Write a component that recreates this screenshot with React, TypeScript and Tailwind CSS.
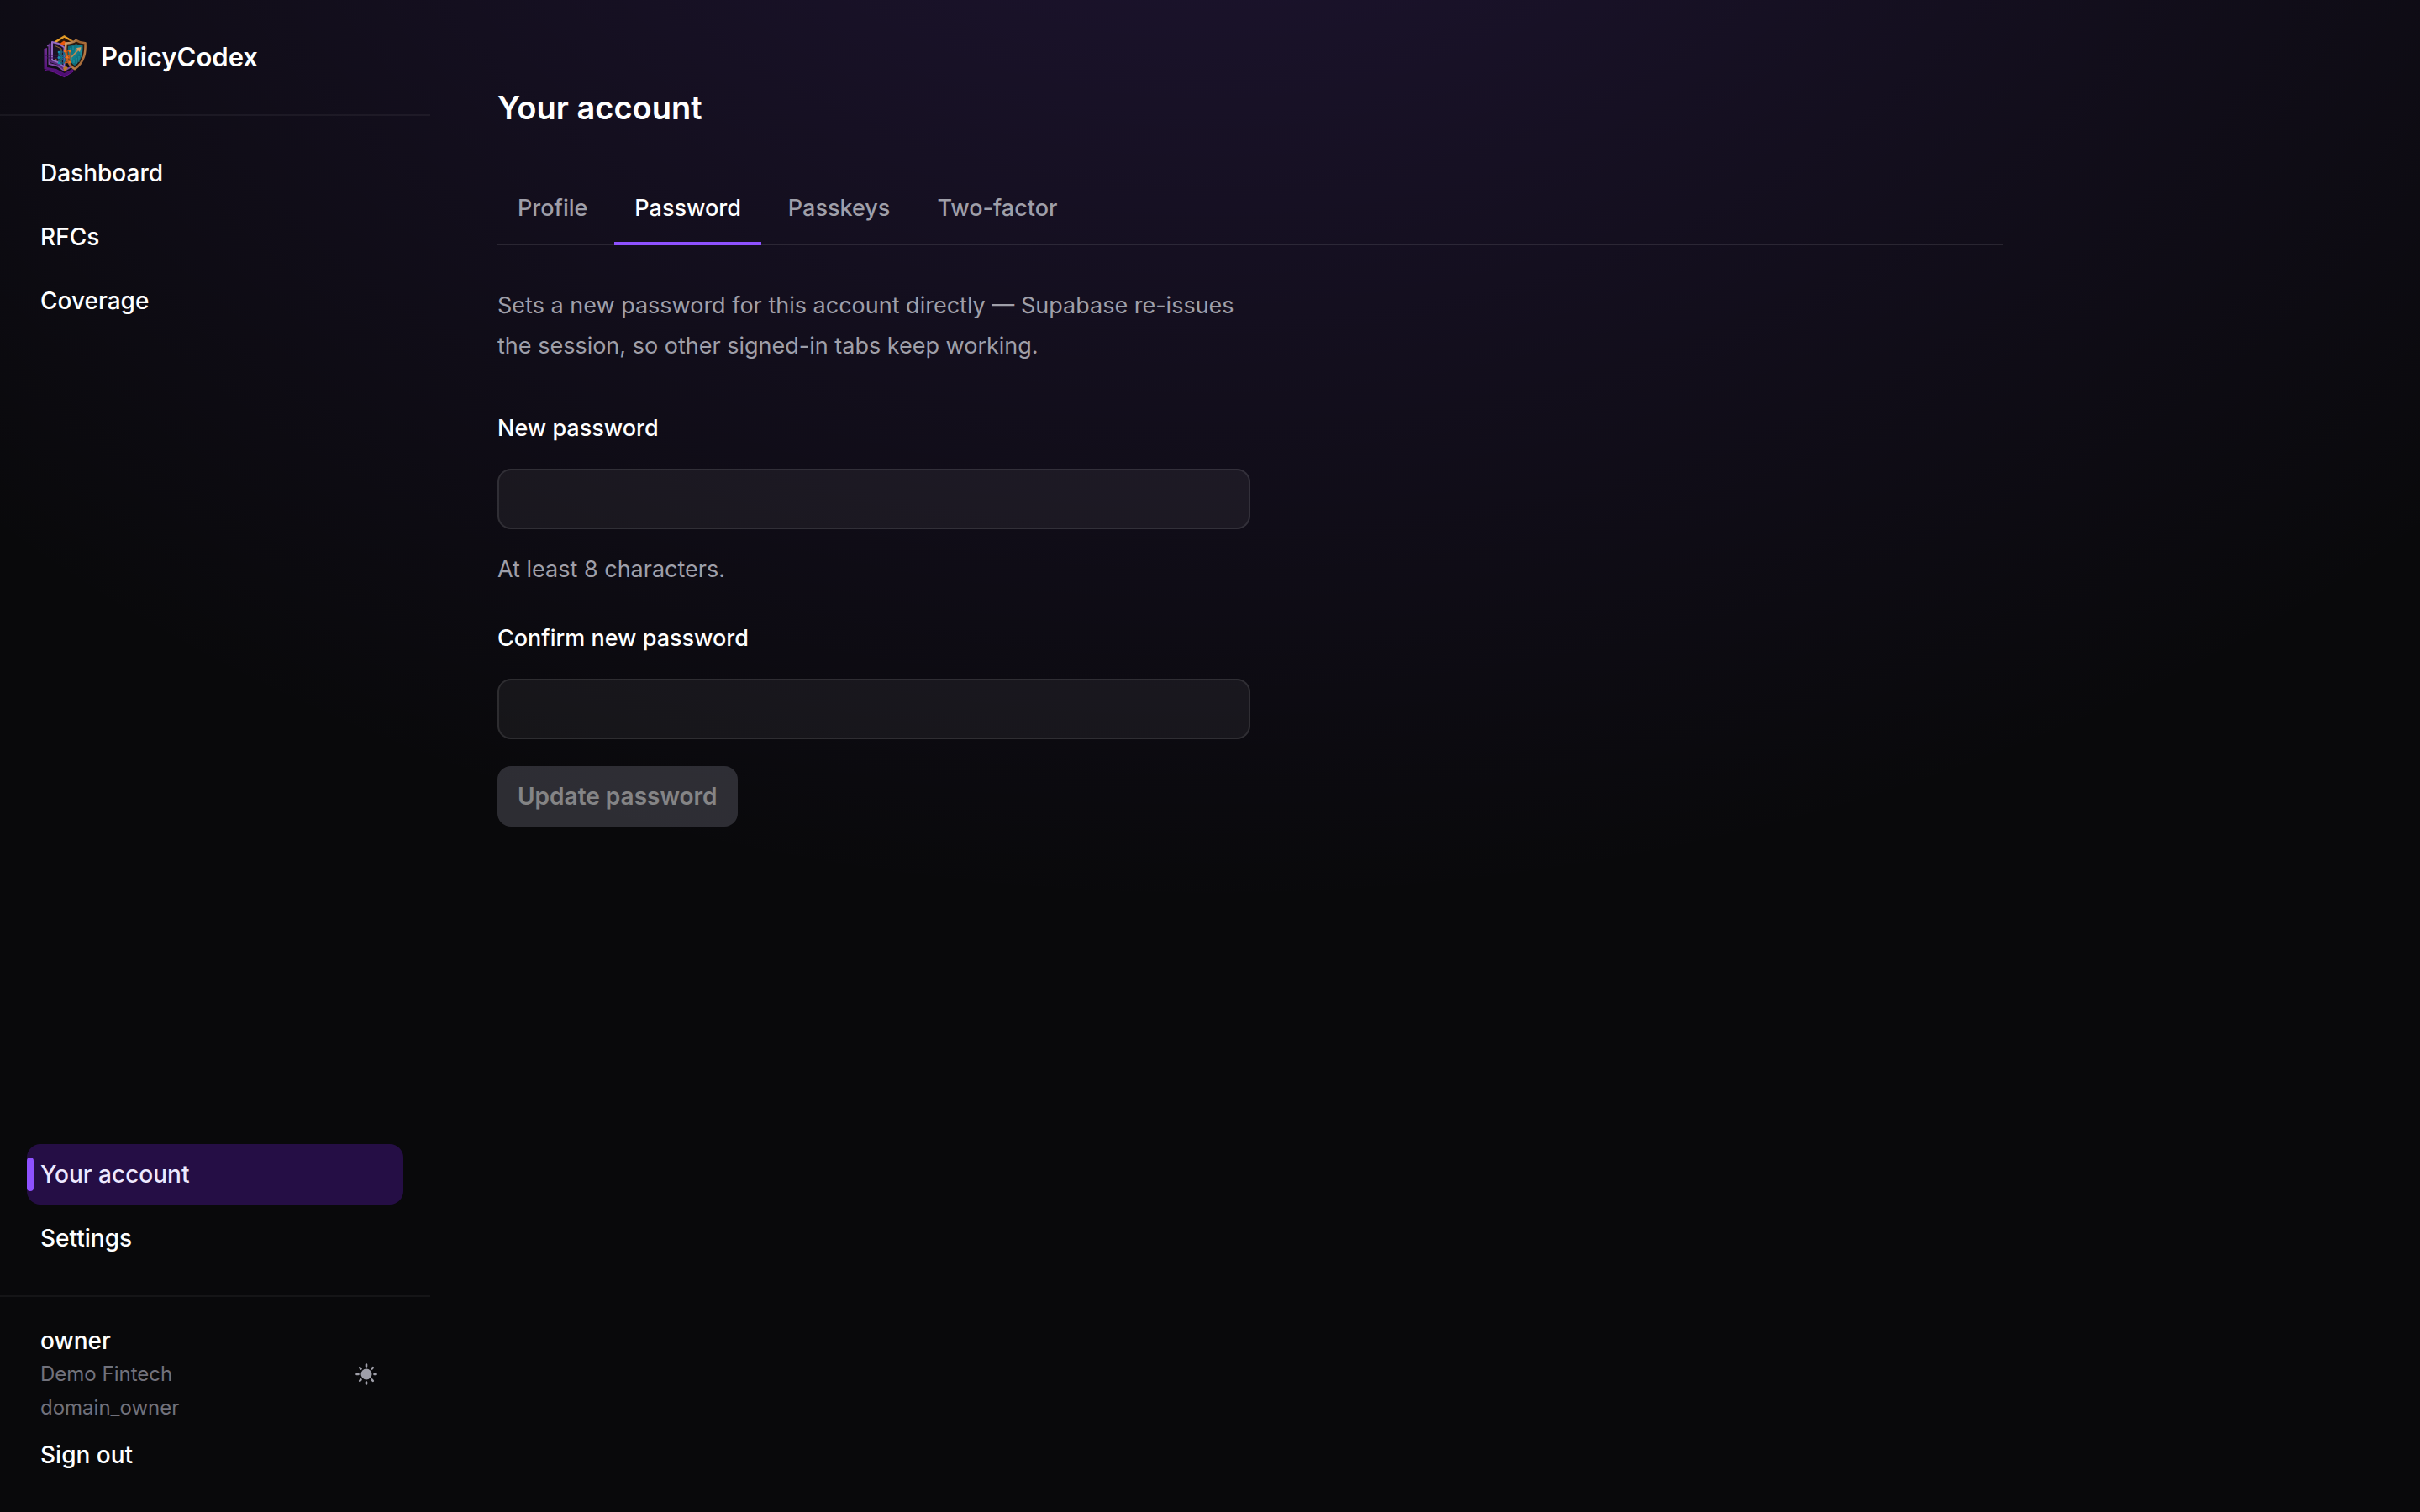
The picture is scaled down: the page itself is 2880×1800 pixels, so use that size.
import type { ReactNode } from "react";

function Logo() {
  return (
    <svg viewBox="0 0 56 56" className="size-14" aria-hidden="true">
      <defs>
        <linearGradient id="roof" x1="0" y1="0" x2="1" y2="1">
          <stop offset="0" stopColor="#c98a22" />
          <stop offset="0.5" stopColor="#f0a52a" />
          <stop offset="1" stopColor="#9a5a1c" />
        </linearGradient>
        <linearGradient id="rim" x1="0" y1="0" x2="1" y2="1">
          <stop offset="0" stopColor="#d9b083" />
          <stop offset="0.35" stopColor="#9a5f2c" />
          <stop offset="0.7" stopColor="#b87c46" />
          <stop offset="1" stopColor="#7a4620" />
        </linearGradient>
        <linearGradient id="glass" x1="0" y1="0" x2="1" y2="1">
          <stop offset="0" stopColor="#0a5f70" />
          <stop offset="0.5" stopColor="#12818f" />
          <stop offset="1" stopColor="#0a4c5a" />
        </linearGradient>
        <linearGradient id="cover" x1="0" y1="0" x2="0" y2="1">
          <stop offset="0" stopColor="#6f2f92" />
          <stop offset="1" stopColor="#4b0a70" />
        </linearGradient>
      </defs>
      <path d="M17 10 28.500 3 40 10 33 15 28.500 12 22 15Z" fill="#2a1608" />
      <path d="M17 10.500 28.500 3.500 40 10.500" fill="none" stroke="url(#roof)" strokeWidth="2.400" />
      <path d="M22.500 12.500 28 8.500 33 12 28 14.500Z" fill="#e8590c" />
      <path d="M4.500 18 8 17v23l11 2 9.500 5 9.500-5 2 1-11.500 8.500L17 45.500 4.500 42Z" fill="url(#cover)" />
      <path d="M8 14.500 10.500 13.500V36l10 2.500 8 5.500 8-4.500" fill="none" stroke="#7d48a5" strokeWidth="2" />
      <path d="M11.500 11.500V33l9 3 8 6" fill="none" stroke="#5c2a80" strokeWidth="2.200" />
      <path d="M14 10v21.500l8 3 6.500 5.500V16.500L22 12Z" fill="#1b1027" stroke="#946ac2" strokeWidth="2" strokeLinejoin="round" />
      <path d="M17.500 14.500 25 18v16l-7.500-4Z" fill="#1a1420" stroke="#8f672a" strokeWidth="1" />
      <path d="M6 26h18M8 29h14" stroke="#3a0f57" strokeWidth="1" />
      <path d="M6 43.500 17 46l11.500 5.500L39 45" fill="none" stroke="#6a1592" strokeWidth="1.200" />
      <path d="M27 41l3-2.500 3 2-4 5Z" fill="#b9772a" />
      <path
        d="M42.500 8c3 2 7 3 11 3.200.3 9 .3 22-12.500 31C31 36 29 24 30.500 11.500 35 11.500 39.500 10.500 42.500 8Z"
        fill="#2a1a12"
        stroke="url(#rim)"
        strokeWidth="2.600"
        strokeLinejoin="round"
      />
      <path d="M42.500 12c2.500 1.500 5 2 8 2.200.2 8-.500 17-9.500 24-7-5-9-13-8-23.500 3.500 0 7-1 9.500-2.700Z" fill="url(#glass)" />
      <path
        d="M36 17v5M39 15v4M45 16v3M48 17v9M46 27v7M43 29v7M40 31v4M37 28v4M49 21v7M42 18v5"
        stroke="#3cc3c8"
        strokeWidth="0.800"
        opacity="0.600"
      />
      <path d="M37 28 46.500 18" stroke="#b98853" strokeWidth="1.800" />
      <path d="M42.500 17.500 48.500 16 47 22Z" fill="#cf9c67" />
      <g fill="none" strokeWidth="1.100">
        <path d="M22 22h7v13h-7zM22 22l7 13M29 22l-7 13M22 28.500h7M25 19v18" stroke="#0f6f8e" />
        <path d="M29 22l6-2v14l-6 1M29 28.500h6M29 22l6 6-6 7M32 21v13" stroke="#c25a1e" />
      </g>
      <g fill="#1a8fb0">
        <circle cx="22" cy="22" r="1.300" />
        <circle cx="22" cy="28.500" r="1.500" />
        <circle cx="22" cy="35" r="1.300" />
      </g>
      <g fill="#f0701c">
        <circle cx="29" cy="21" r="1.300" />
        <circle cx="35" cy="21" r="1.400" />
        <circle cx="32" cy="28" r="1.600" />
        <circle cx="35" cy="34" r="1.400" />
      </g>
    </svg>
  );
}

function SunIcon() {
  return (
    <svg viewBox="-16 -16 32 32" className="size-8" aria-hidden="true">
      <circle r="6.500" fill="currentColor" />
      <path
        d="M0-9.500V-11.500M0 9.500V11.500M-9.500 0H-11.500M9.500 0H11.500M6.500-6.500 7.800-7.800M-6.500-6.500-7.800-7.800M6.500 6.500 7.800 7.800M-6.500 6.500-7.800 7.800"
        stroke="currentColor"
        strokeWidth="2.600"
        strokeLinecap="round"
      />
    </svg>
  );
}

function NavItem({ current = false, children }: { current?: boolean; children: ReactNode }) {
  return (
    <a
      href="#"
      aria-current={current ? "page" : undefined}
      className={
        current
          ? "relative flex h-18 items-center rounded-2xl bg-[#250e45] px-4 font-medium text-violet-100"
          : "relative flex h-18 items-center rounded-2xl px-4 font-medium text-white"
      }
    >
      {current && <span className="absolute inset-y-4 left-0 w-2 rounded-full bg-[#8e51ff]" />}
      {children}
    </a>
  );
}

function Sidebar() {
  return (
    <aside className="flex w-128 shrink-0 flex-col">
      <div className="border-b-2 border-white/5 p-8">
        <a href="#" className="flex h-18 items-center gap-4 px-4 text-[31px] font-semibold text-white">
          <Logo />
          PolicyCodex
        </a>
      </div>
      <nav className="flex flex-1 flex-col gap-1 p-8">
        <NavItem>Dashboard</NavItem>
        <NavItem>RFCs</NavItem>
        <NavItem>Coverage</NavItem>
        <div className="flex-1" />
        <NavItem current>Your account</NavItem>
        <NavItem>Settings</NavItem>
      </nav>
      <div className="border-t-2 border-white/5 p-8">
        <div className="flex items-center justify-between px-4">
          <div className="leading-10">
            <p className="font-medium text-white">owner</p>
            <p className="text-2xl/10 text-zinc-500">Demo Fintech</p>
            <p className="text-2xl/10 text-zinc-500">domain_owner</p>
          </div>
          <button type="button" aria-label="Switch to light theme" className="p-3 text-[#9f9fa9]">
            <SunIcon />
          </button>
        </div>
        <button type="button" className="flex h-18 w-full items-center px-4 font-medium text-white">
          Sign out
        </button>
      </div>
    </aside>
  );
}

const tabs = ["Profile", "Password", "Passkeys", "Two-factor"];

function Tabs() {
  return (
    <div role="tablist" className="mt-12 flex gap-2 border-b-2 border-white/10 text-[27px]">
      {tabs.map((tab) => (
        <button
          key={tab}
          type="button"
          role="tab"
          aria-selected={tab === "Password"}
          className={
            tab === "Password"
              ? "-mb-0.5 border-b-4 border-[#8e51ff] px-6 py-5 leading-10 font-medium text-white"
              : "-mb-0.5 border-b-4 border-transparent px-6 py-5 leading-10 font-medium text-[#9f9fa9]"
          }
        >
          {tab}
        </button>
      ))}
    </div>
  );
}

function PasswordField({ id, label, hint }: { id: string; label: string; hint?: string }) {
  return (
    <div>
      <label htmlFor={id} className="block pt-0.5 leading-12 font-medium text-white">
        {label}
      </label>
      <input
        id={id}
        type="password"
        className="mt-6 block h-18 w-full rounded-2xl border-2 border-white/10 bg-white/5 px-6 text-white"
      />
      {hint && <p className="mt-6 leading-12 text-[#9f9fa9]">{hint}</p>}
    </div>
  );
}

export default function App() {
  return (
    <div className="flex min-h-screen bg-[#09090b] bg-[radial-gradient(ellipse_70%_80%_at_50%_-20%,rgba(142,81,255,0.17),transparent)] font-[Inter,sans-serif] text-[28px] antialiased">
      <Sidebar />
      <main className="min-w-0 flex-1 px-20 py-24">
        <div className="max-w-448">
          <h1 className="text-[38px] leading-16 font-semibold text-white">Your account</h1>
          <Tabs />
          <form className="mt-12 flex max-w-224 flex-col gap-8 text-[27px]">
            <p className="mb-4 leading-12 text-[#9f9fa9]">
              Sets a new password for this account directly — Supabase re-issues the session, so other signed-in tabs keep
              working.
            </p>
            <PasswordField id="new-password" label="New password" hint="At least 8 characters." />
            <PasswordField id="confirm-password" label="Confirm new password" />
            <button
              type="submit"
              disabled
              className="h-18 self-start rounded-2xl bg-zinc-600 px-6 text-[28px] font-semibold text-white opacity-50"
            >
              Update password
            </button>
          </form>
        </div>
      </main>
    </div>
  );
}
